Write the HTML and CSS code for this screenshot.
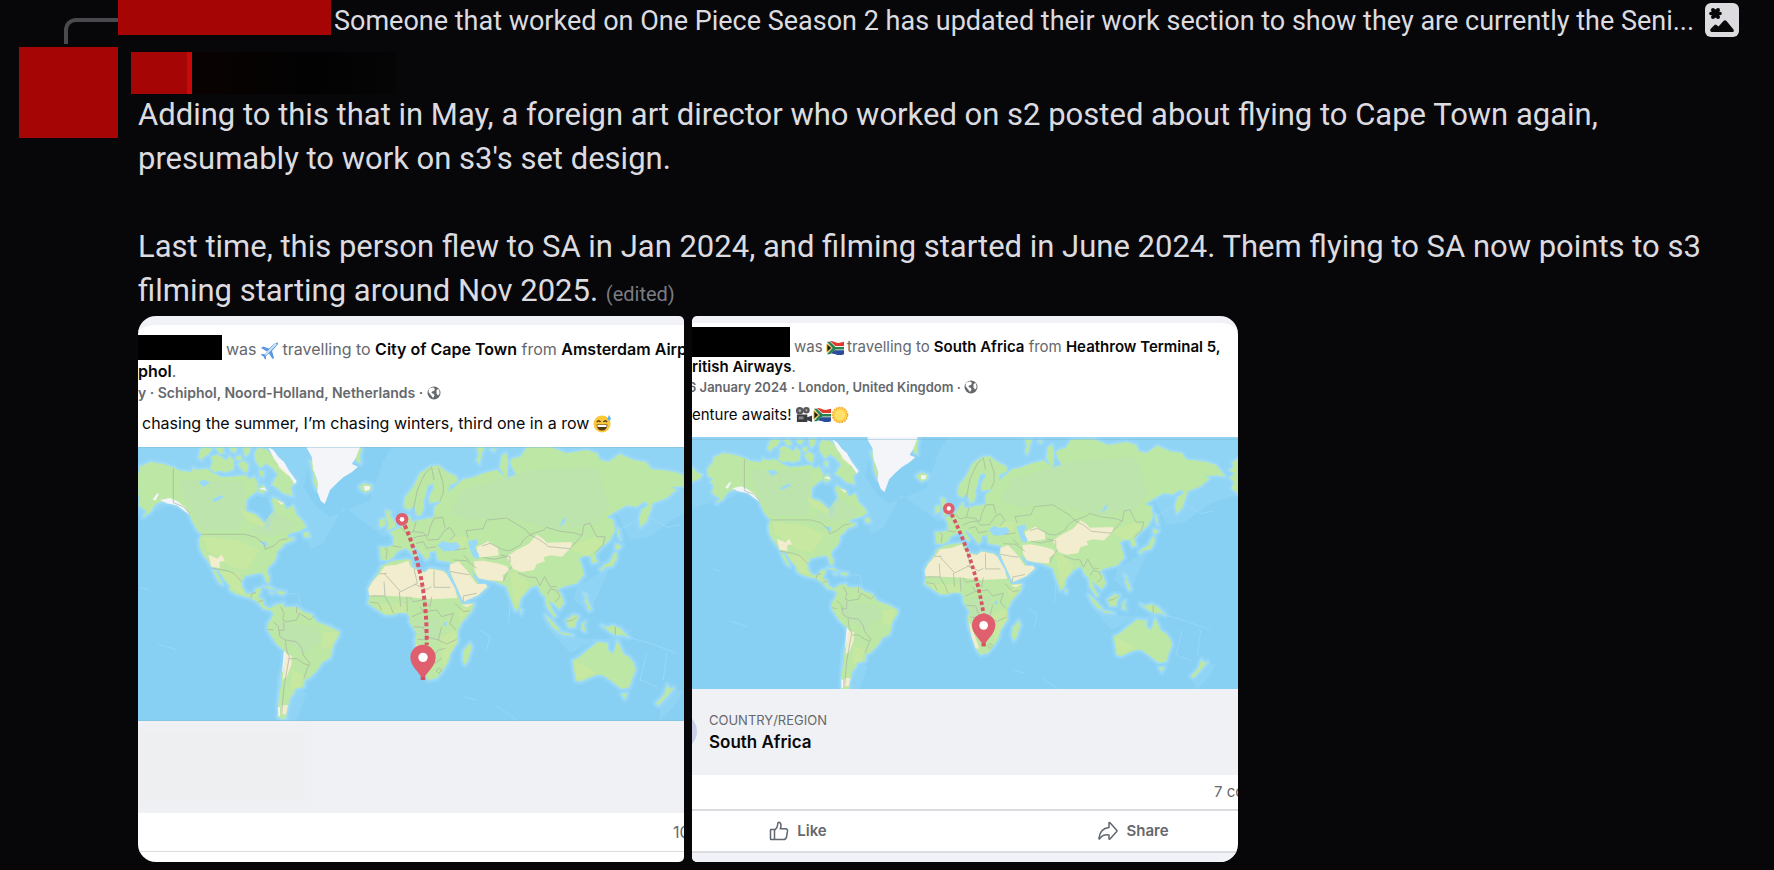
FILE: index.html
```html
<!DOCTYPE html>
<html lang="en">
<head>
<meta charset="utf-8">
<title>Message</title>
<link rel="stylesheet" href="styles.css">
</head>
<body>
<svg class="defs" aria-hidden="true">
  <defs>
    <path id="land" d="M10,118 28,95 30,80 62,66 100,72 130,82 150,92 185,96 190,84 205,90 230,86 250,100 275,112 310,110 345,105 360,118 372,110 384,130 385,150 365,165 350,178 345,205 352,215 375,222 395,240 402,258 413,280 420,262 428,235 440,222 430,200 426,182 430,172 445,180 462,192 470,208 490,196 500,225 520,245 528,260 510,272 485,278 470,285 478,295 492,300 465,310 452,325 440,335 440,348 432,365 415,382 411,395 418,412 416,430 408,425 402,405 395,398 370,402 345,408 335,425 338,445 350,462 372,460 378,447 394,443 390,460 385,473 398,478 402,495 415,504 425,505 430,498 440,494 460,490 462,500 480,502 500,500 520,515 545,523 560,545 580,553 600,560 628,575 626,588 610,615 605,640 600,655 578,665 562,690 540,712 524,720 522,740 495,748 492,760 480,775 475,795 470,815 468,836 455,838 445,830 445,790 452,740 456,700 464,660 462,632 440,612 425,590 412,568 415,550 425,535 430,520 420,510 400,506 385,488 365,475 340,468 318,462 300,450 298,435 280,415 265,390 245,382 232,360 220,345 210,325 208,300 215,283 200,268 188,245 175,215 150,198 125,190 100,184 80,190 70,200 62,215 40,230 50,212 38,205 25,195 30,170 20,160 28,150 12,140Z
    M248,388 258,392 268,412 278,434 268,428 256,408Z
    M240,88 248,66 244,50 262,44 276,52 290,62 298,48 312,62 310,88 290,96 268,92 254,96Z
    M205,52 212,28 228,20 246,26 234,44 222,50 214,60Z
    M258,24 276,20 282,38 270,42Z M300,20 320,24 316,38 304,34Z M318,50 332,46 334,62 320,60Z M340,20 362,20 358,38 346,50 342,36Z M324,72 340,62 356,74 350,98 336,90Z M374,40 384,24 410,28 440,58 468,88 498,126 482,142 488,168 460,160 440,142 426,134 438,112 444,104 428,84 408,70 392,84 376,62Z M385,155 390,140 400,134 410,152 396,160Z M390,92 402,94 400,112 390,106Z
    M520,278 534,276 540,290 524,292Z M480,292 492,292 486,300Z
    M398,438 420,440 436,450 420,446Z M444,452 466,456 458,464 444,460Z M420,456 432,458 426,460Z
    M540,62 550,66 556,110 564,130 562,150 552,128 548,96Z M682,22 696,22 690,48 692,70 680,64 674,46Z
    M688,140 702,130 726,136 724,150 706,158 694,150Z
    M768,210 782,216 780,226 796,250 798,262 772,270 776,256 770,240Z M750,240 764,234 766,256 750,262Z
    M718,470 715,445 725,425 745,400 755,378 785,364 830,358 845,360 846,380 868,392 885,396 898,384 940,392 950,400 970,440 988,475 995,492 1032,490 1026,512 995,548 982,575 984,605 960,640 955,665 940,690 920,714 896,720 884,705 872,670 858,632 855,600 860,580 840,548 840,532 830,520 808,516 790,525 765,524 735,505 714,490Z
    M1000,632 1020,610 1026,622 1012,665 1004,674 998,660Z
    M750,322 752,358 772,362 790,352 800,336 812,330 828,324 838,332 856,352 862,346 850,328 846,315 862,328 878,345 888,360 898,352 900,336 918,332 922,360 960,366 966,376 958,392 975,430 998,472 1000,485 1045,465 1072,440 1065,432 1046,432 1030,408 1026,394 1045,414 1072,420 1100,426 1130,440 1140,470 1156,512 1168,502 1172,475 1200,444 1222,434 1235,462 1246,470 1250,500 1272,532 1278,528 1264,504 1258,484 1270,490 1288,508 1302,490 1295,465 1282,450 1300,440 1340,430 1362,405 1355,378 1348,356 1364,345 1380,348 1388,370 1402,366 1394,345 1414,322 1440,300 1455,270 1450,240 1430,232 1455,215 1490,196 1520,200 1545,184 1556,195 1535,210 1528,235 1532,262 1550,244 1560,215 1568,190 1610,174 1638,150 1625,142 1660,138 1690,142 1660,105 1630,95 1595,90 1565,88 1548,66 1510,60 1470,42 1435,66 1410,60 1400,40 1370,30 1310,40 1260,20 1190,22 1172,50 1150,55 1140,66 1148,84 1162,108 1145,114 1128,126 1132,100 1134,66 1128,38 1114,48 1110,84 1126,110 1100,90 1060,100 1025,114 1000,118 975,140 955,156 958,136 982,126 980,110 950,95 925,76 900,80 870,100 850,140 825,172 822,200 836,210 852,198 862,228 874,224 882,200 880,186 888,160 892,138 908,130 912,142 898,170 900,188 936,184 914,200 912,232 870,240 846,246 838,226 828,240 812,262 780,276 790,292 792,316 770,322Z
    M1040,62 1046,44 1042,22 1062,22 1056,40 1048,72Z M1082,28 1096,26 1092,34Z
    M-40,113 -22,130 -6,136 -16,150 -40,158Z
    M1740,80 1712,96 1716,110 1704,122 1720,132 1704,146 1718,160 1710,180 1740,206Z
    M1410,388 1424,374 1440,366 1452,340 1460,336 1460,356 1448,378 1424,382 1416,392Z M1458,312 1474,318 1466,328 1456,326Z M1460,262 1466,270 1472,300 1466,290Z
    M1246,524 1264,540 1290,570 1284,574 1268,562 1256,544Z M1286,576 1312,580 1330,586 1300,584Z M1308,542 1330,524 1346,528 1338,548 1336,562 1316,562Z M1356,552 1366,545 1362,556 1366,574 1356,570Z M1362,460 1370,466 1366,484 1378,512 1384,508 1376,488Z M1168,506 1176,510 1174,520Z
    M1414,556 1430,562 1450,556 1472,566 1484,580 1496,592 1476,584 1460,586 1440,576 1430,568Z
    M1328,662 1350,650 1368,634 1384,622 1404,606 1434,610 1434,630 1450,642 1456,622 1462,602 1472,622 1480,642 1498,652 1512,672 1516,690 1506,716 1498,742 1476,746 1462,738 1446,724 1420,706 1400,704 1376,714 1354,724 1338,722 1334,700Z
    M1475,762 1492,760 1484,776Z M1612,736 1620,746 1632,744 1612,768 1586,796 1578,790 1602,766Z"/>
    <g id="world">
      <rect x="-60" y="0" width="1840" height="860" fill="#87cff3"/>
      <g fill="#9adaf8">
        <path d="M-60,0H560L520,140 560,200 600,230 720,180 760,60 800,0H1780V190L1640,230 1560,290 1500,300 1440,180 1000,160 900,250 760,290 640,200 580,310 540,330 490,190 200,130 90,210-60,250Z" opacity=".4"/>
        <path d="M480,720 530,760 500,843 440,843 440,700ZM1230,520 1330,590 1420,600 1520,560 1460,610 1400,600 1320,640 1250,560ZM1340,440 1440,380 1380,520 1330,480ZM1590,760 1660,750 1640,790 1590,843Z" opacity=".4"/>
      </g>
      <g fill="none" stroke="#a5dff9" stroke-width="3" opacity=".6">
        <path d="M30,442 56,450M85,612 140,630M450,462 505,462 512,500M1050,570 1080,590 1070,630M1140,490 1136,550M1560,232 1610,262 1652,254M1430,290 1540,230M1490,590 1560,610 1640,640M1550,640 1530,720 1580,740M1610,640 1600,720M1000,770 1040,780M1095,795 1160,840"/>
      </g>
      <use href="#land" fill="none" stroke="#9bdaf7" stroke-width="24" stroke-linejoin="round" opacity=".4"/>
      <use href="#land" fill="none" stroke="#9fdcf8" stroke-width="11" stroke-linejoin="round" opacity=".8"/>
      <use href="#land" fill="#bce7a4"/>
      <g fill="#bfe3b2" opacity=".75">
        <path d="M150,120 340,125 350,200 330,270 215,270 160,170ZM430,210 500,250 480,275 420,290 350,275 400,250ZM1000,150 1200,90 1400,80 1440,200 1400,250 1290,270 1120,230 1020,240 960,220ZM450,545 560,560 570,600 520,640 450,590ZM850,540 930,530 930,600 870,600Z"/>
      </g>
      <g fill="#cbe8a0" opacity=".75">
        <path d="M330,208 370,225 405,250 400,262 350,240ZM220,290 320,300 390,330 350,390 300,380 230,330ZM270,395 330,395 332,440 345,462 310,450ZM580,575 622,576 605,620 575,625ZM485,690 520,705 510,740 480,750ZM970,290 1010,290 1000,330 960,320ZM1140,400 1160,395 1200,430 1156,500ZM1310,320 1400,290 1420,310 1370,350ZM1334,665 1380,685 1400,700 1340,720ZM730,490 830,490 830,518 765,522ZM930,590 980,570 980,610 940,680ZM985,510 1026,500 990,545Z"/>
      </g>
      <g fill="#f2edce">
        <path d="M718,470 715,447 727,425 748,402 765,378 800,374 835,362 842,380 868,394 885,397 898,386 938,393 950,402 975,445 982,474 900,478 830,470 730,466Z"/>
        <path d="M960,374 985,364 1010,390 1040,432 1066,432 1072,440 1045,465 1000,485 975,430 960,394ZM1032,364 1060,362 1100,370 1130,378 1140,392 1118,405 1120,424 1072,420 1045,414 1034,392ZM1040,322 1074,304 1104,324 1106,346 1060,352 1042,350Z"/>
        <path d="M1130,350 1160,330 1196,312 1220,284 1240,296 1250,308 1326,306 1324,322 1296,350 1262,346 1240,352 1245,364 1220,372 1212,390 1176,396 1150,388 1140,368Z"/>
        <path d="M235,344 250,350 262,356 275,344 284,362 268,366 270,384 244,380ZM466,640 486,648 484,676 470,712 458,718ZM455,796 474,796 468,824 452,820ZM442,58 468,90 484,108 470,104 446,82ZM440,180 462,188 455,196ZM858,610 874,650 892,700 880,700 866,660ZM994,494 1030,492 1010,502Z"/>
      </g>
      <g fill="#f3f5f8">
        <path d="M528,0 530,24 545,50 550,90 558,110 564,130 562,155 572,182 584,192 592,172 600,150 622,128 640,112 666,96 684,80 666,72 678,52 690,22 692,0Z"/>
        <path d="M415,22 430,30 446,52 462,66 478,94 500,124 494,132 474,102 450,80 432,56ZM702,138 720,138 718,150 704,152ZM68,178 80,162 88,160 76,182ZM90,180 120,174 142,184 164,200 180,224 170,218 140,196 110,190ZM386,146 404,142 410,152ZM462,632 468,640 460,690 456,700ZM444,800 450,802 450,828 445,830Z"/>
      </g>
      <g fill="#9adaf8">
        <path d="M922,316 940,302 958,310 980,306 992,320 975,332 940,334ZM1014,304 1040,298 1044,310 1034,322 1048,346 1044,358 1030,352 1020,328ZM205,124 225,120 240,128 220,142ZM245,180 272,166 282,170 255,186ZM1286,262 1300,236 1310,232 1304,248ZM941,548 950,544 950,556 942,558ZM385,304 410,306 412,322 400,314ZM380,110 388,100 394,122 386,128Z"/>
      </g>
      <g fill="none" stroke="#a9b3a3" stroke-width="2.5" opacity=".85">
        <path d="M130,85V188L160,200 180,222M215,283H345L378,292 402,312 405,328 430,318 450,300 472,296M245,384 290,392 312,400 334,424M362,474 366,460 378,458M384,486 400,480M452,500 462,520 458,540 470,545 500,540 508,520 540,540 552,528M430,545 445,560 450,590 466,600 470,632 478,650 462,740 455,820M466,600 500,605 515,625 520,645 540,670 530,690 522,715M478,656 500,656 520,670 536,676M500,500 500,520M412,568 430,570M445,572 462,570 462,545"/>
        <path d="M762,425 765,468 715,468M762,400 812,455 862,430 852,385M748,402 770,400M912,392V442H960M852,432 890,448 905,440M720,486 745,490 755,510M765,470 780,495 790,520M808,455 812,500M830,470 832,515M838,470 850,485 880,480 900,500 905,470M846,530 880,515 920,510 935,530 970,520M870,500 880,515M850,560 880,562 890,590 925,600 935,560M925,600 950,612 980,598M862,598 892,600M875,650 910,650 925,630 945,625M910,650 915,670 935,655M918,692 928,684 936,690 926,700ZM975,490 1000,515 1020,512M970,520 960,550 978,570M1000,485 1000,468 1040,460M960,394 990,400 1018,404"/>
        <path d="M850,210 862,150 885,100 905,82M905,82 912,120M925,84 940,130 940,160 930,182M764,325 772,330 768,358M788,318 815,322M812,262 830,280 850,275 858,245M838,300 860,290 895,285 900,262 912,235M850,275 880,278 895,300 925,298 945,270 960,262 975,285 960,300M912,235 938,232 945,262M858,310 880,305 890,325 918,320M975,330 1010,325M1000,345 1020,364M970,360 1010,362 1040,385"/>
        <path d="M1014,292 1008,272 1060,266 1070,240 1130,234 1160,252 1186,268 1200,284 1180,300 1170,316 1140,332 1120,330 1080,310 1056,318M1200,284 1240,270 1250,262 1290,274 1330,278 1356,286 1362,254 1380,250 1400,290 1426,290 1418,316 1394,340M1200,284 1230,300 1256,320 1320,326 1356,286M1110,345 1140,350 1140,368M1060,352 1090,358 1130,350M1120,424 1130,400 1145,380M1165,400 1200,412 1218,412 1230,436 1244,410 1260,440 1280,440M1252,462 1262,446 1280,452 1290,470 1275,486M1310,544 1330,540 1340,530M1456,560V586"/>
      </g>
      <path d="M-60,22H1780M-60,842H1780" stroke="#7fb7cf" stroke-width="3" opacity=".5"/>
    </g>
    <g id="origin"><circle r="19" fill="#df5d6c"/><circle r="7" fill="#fff"/></g>
    <g id="pin"><path d="M0,68C-10,45-38,28-38,0A38,38 0 0 1 38,0C38,28 10,45 0,68Z" fill="#e05f6e"/><path d="M-7,58H7V68H-7Z" fill="#d5505f"/><circle r="14" fill="#fff"/></g>
    <g id="za">
      <path d="M1 3Q5 1 9 3T19 3V16Q14 18 10 16T1 16Z" fill="#f4f4f2"/>
      <path d="M4 2Q7 2 10 3.500T19 3V7.500H10Z" fill="#e0392e"/>
      <path d="M9 12H19V16Q14 18 10 16L5 15Z" fill="#2b4c9b"/>
      <path d="M1 3 4 3 10 8.500H19V11H10L4 16H1L7 9.500Z" fill="#28804f"/>
      <path d="M1 5 6 9.500 1 14Z" fill="#1b1b18" stroke="#f0b52c"/>
    </g>
    <g id="globe">
      <circle cx="7" cy="7" r="6.500" fill="#65686c"/>
      <path d="M2 3Q4 1 6.500 1.500L8 3 7 5 5 5.500 4.500 7 7 8 7.500 9.500 6 12 4.500 10 3 8 1.500 6ZM9.500 4 11.500 3Q13 5 12.500 8L11 9.500 9.500 7.500Z" fill="#fff"/>
    </g>
  </defs>
</svg>

<article class="message">
  <header class="reply">
    <span class="spine"></span>
    <span class="reply-name"></span>
    <span class="reply-text">Someone that worked on One Piece Season 2 has updated their work section to show they are currently the Seni...</span>
    <svg class="reply-icon" viewBox="0 0 34 34" role="img" aria-label="Image"><rect width="34" height="34" rx="6" fill="#dcdce0"/><g fill="#070709"><circle cx="10.500" cy="10.500" r="4.200"/><circle cx="8" cy="7" r="2"/><circle cx="13" cy="7" r="2"/><circle cx="15" cy="10.500" r="1.800"/><circle cx="6" cy="10.500" r="1.800"/><circle cx="8" cy="14" r="2"/><circle cx="13" cy="14" r="2"/><path d="M5.500 26 9.500 22Q10.500 21 11.500 22L13.500 23.500 18.500 18Q20 16.500 21.500 18L28.500 26.500Q29.500 29 27.500 29H7Q4.500 28.500 5.500 26Z"/></g></svg>
  </header>
  <div class="avatar"></div>
  <div class="content">
    <div class="author"><span class="author-name"></span><span class="author-meta"></span></div>
    <div class="text">
      <p>Adding to this that in May, a foreign art director who worked on s2 posted about flying to Cape Town again, presumably to work on s3's set design.</p>
      <p>Last time, this person flew to SA in Jan 2024, and filming started in June 2024. Them flying to SA now points to s3 filming starting around Nov 2025. <small>(edited)</small></p>
    </div>
    <div class="gallery">
      <section class="card card-a">
        <div class="post-head">
          <div class="line title"><span class="redacted"></span>was <svg class="emoji" viewBox="0 0 19 19" role="img" aria-label="Airplane"><path d="M1 7 3 5.500 9 7.500 14 3Q17 1 18 1.500 18.500 3 16 5.500L12 10 14 17 12.500 18 9 12.500 6 15 6 18 5 18.500 3.500 15.500 1 14 1.500 13 4.500 13 7 10.500Z" fill="#5a9be0"/><path d="M5 14 16 3" stroke="#cfe3f6" stroke-width="2"/></svg> travelling to <b>City of Cape Town</b> from <b>Amsterdam Airport</b></div>
          <div class="line title"><b>phol</b>.</div>
          <div class="line meta">y · Schiphol, Noord-Holland, Netherlands · <svg class="globe" viewBox="0 0 14 14" role="img" aria-label="Public"><use href="#globe"/></svg></div>
          <p class="line post-text inset">chasing the summer, I’m chasing winters, third one in a row <svg class="emoji" viewBox="0 0 19 19" role="img" aria-label="Grinning face with sweat"><circle cx="9" cy="10" r="8.500" fill="#fbc83a"/><path d="M4 8Q5.500 5.500 7.500 8M10.500 8Q12.500 5.500 14 8" fill="none" stroke="#5b3b16" stroke-width="1.500"/><path d="M3.500 10.500H14.500Q14 16.500 9 16.500T3.500 10.500Z" fill="#5b3b16"/><path d="M4.500 11H13.500V13H4.500Z" fill="#fff"/><path d="M16 1Q19 5 17 6.500 14.500 7 14.500 4.500Z" fill="#5db8ef"/></svg></p>
        </div>
        <svg class="map" viewBox="24 21 1638 822" role="img" aria-label="Route from Amsterdam to Cape Town">
          <use href="#world"/>
          <path class="route" d="M816,238Q893,400 890,616"/>
          <use href="#origin" x="816" y="238"/><use href="#pin" x="879" y="652"/>
        </svg>
        <div class="place"><span class="smudge"></span></div>
        <div class="counts"><span>10 comments</span></div>
      </section>
      <section class="card card-b">
        <div class="post-head">
          <div class="line title"><span class="redacted"></span>was <svg class="emoji" viewBox="0 0 19 19" role="img" aria-label="South Africa"><use href="#za"/></svg> travelling to <b>South Africa</b> from <b>Heathrow Terminal 5,</b></div>
          <div class="line title"><b>ritish Airways</b>.</div>
          <div class="line meta cut">6 January 2024 · London, United Kingdom · <svg class="globe" viewBox="0 0 14 14" role="img" aria-label="Public"><use href="#globe"/></svg></div>
          <p class="line post-text">enture awaits! <span class="emojis"><svg class="emoji" viewBox="0 0 19 19" role="img" aria-label="Movie camera"><circle cx="5" cy="5" r="4" fill="#55575b"/><circle cx="12" cy="4.500" r="3.500" fill="#55575b"/><path d="M2 9H13V17H2ZM13 12 18 10V17L13 15Z" fill="#3a3c40"/><circle cx="5" cy="5" r="1.500" fill="#a5a7aa"/><circle cx="12" cy="4.500" r="1.200" fill="#a5a7aa"/><path d="M4 11H9V14H4Z" fill="#85878b"/></svg><svg class="emoji" viewBox="0 0 19 19" role="img" aria-label="South Africa"><use href="#za"/></svg><svg class="emoji" viewBox="0 0 19 19" role="img" aria-label="Sun"><circle cx="9.500" cy="9.500" r="8" fill="#fbd04a" stroke="#f5ad33" stroke-width="1.500" stroke-dasharray="2 1"/><circle cx="9.500" cy="9.500" r="5.500" fill="#ffe06a"/></svg></span></p>
        </div>
        <svg class="map" viewBox="-40 14 1771 817" role="img" aria-label="Route from London to South Africa">
          <use href="#world"/>
          <path class="route" d="M793,246Q878,412 906,590"/>
          <use href="#origin" x="793" y="246"/><use href="#pin" x="906" y="625"/>
        </svg>
        <div class="place"><span class="place-dot"></span><div><div class="place-kind">COUNTRY/REGION</div><div class="place-name">South Africa</div></div></div>
        <div class="counts"><span>7 comments</span></div>
        <div class="actions">
          <button type="button"><svg viewBox="0 0 20 20" aria-hidden="true"><path d="M1.500 9Q1.500 8.500 2 8.500H5.500V18.500H2Q1.500 18.500 1.500 18ZM5.500 9.500Q8.500 7 8.700 3.500 8.700 1.200 10 1.200 12 1.500 12 4.500 12 6.500 11.200 7.800H16.500Q18.800 8 18.500 10.200L17.500 16Q17 18.500 14.500 18.500H5.500"/></svg>Like</button>
          <button type="button" class="share"><svg viewBox="0 0 20 20" aria-hidden="true"><path d="M11 2.200Q11 1 12 1.800L18.700 9.200Q19.200 10 18.700 10.600L12 18Q11 18.800 11 17.600V14Q5 13 1.800 17.600 .8 18.500 1 17 2 7.500 11 6.500Z"/></svg>Share</button>
        </div>
        <div class="tail"></div>
      </section>
    </div>
  </div>
</article>
</body>
</html>
```
FILE: styles.css
```css
* { box-sizing: border-box; }
body { margin: 0; background: #070709; color: #dcdce0; font-family: Roboto, "Liberation Sans", sans-serif; }
p { margin: 0; }
svg { display: block; }
.defs { position: absolute; width: 0; height: 0; }

.message { display: grid; grid-template-columns: 118px 1fr; padding-bottom: 8px; }
.reply { grid-column: 1 / -1; display: flex; align-items: flex-start; height: 47px; padding-right: 35px; }
.spine { width: 54px; height: 26px; margin: 18px 0 0 64px; border: solid #4a4a4e; border-width: 4px 0 0 4px; border-radius: 12px 0 0 0; flex: none; }
.reply-name { width: 213px; height: 35px; background: #a50505; flex: none; }
.reply-text { flex: 1; min-width: 0; margin-left: 3px; font-size: 27px; line-height: 42px; white-space: nowrap; overflow: hidden; text-overflow: ellipsis; }
.reply-icon { width: 34px; height: 34px; margin: 3px 0 0 8px; flex: none; }

.avatar { width: 99px; height: 91px; margin-left: 19px; background: #a50505; }
.content { padding: 5px 60px 0 20px; }
.author { display: flex; height: 42px; margin: 0 0 -1px -7px; }
.author-name { width: 61px; background: #a50505; border-right: 5px solid #c80909; }
.author-meta { width: 204px; background: linear-gradient(90deg, #0a0202, #020202 60%, #050506); }
.text { font-size: 31px; line-height: 44px; }
.text p + p { margin-top: 44px; }
.text small { font-size: 20px; line-height: 20px; color: #7b7b82; }

.gallery { display: grid; grid-template-columns: 1fr 1fr; gap: 8px; max-width: 1100px; margin-top: 3px; }
.card { aspect-ratio: 1; display: flex; flex-direction: column; overflow: hidden; background: #fff; color: #080809; font-family: Inter, "Liberation Sans", sans-serif; border-radius: 5px; }
.card-a { border-top: 9px solid #f0f2f7; border-radius: 18px 5px 5px 18px; }
.card-b { border-top: 7px solid #f0f2f7; border-radius: 5px 18px 18px 5px; }
.line { display: flex; align-items: center; white-space: pre; }
.line.title:first-child { align-items: flex-end; }
.title { color: #65686c; }
.title b, .place-name { color: #080809; font-weight: 600; }
.meta { color: #65686c; font-weight: 600; }
.inset { padding-left: 4px; }
.cut { margin-left: -4px; }
.redacted { align-self: stretch; background: #000; flex: none; }
.emojis { display: flex; gap: 2px; }
.emoji { flex: none; margin: 0 -1px; }
.map { width: 100%; flex: none; }
.route { fill: none; stroke: #d85565; stroke-width: 12; stroke-dasharray: 12 8; }

.card-a .post-head { height: 122px; padding-top: 10px; }
.card-a .line { height: 22px; font-size: 16px; line-height: 22px; }
.card-a .line.title:first-child { height: 25px; }
.card-a .line.meta { font-size: 14px; }
.card-a .post-text { margin-top: 8px; }
.card-a .redacted { width: 84px; margin-right: 4px; }
.card-a .emoji { width: 19px; height: 19px; }
.globe { width: 14px; height: 14px; }

.card-b .post-head { height: 114px; padding-top: 4px; }
.card-b .line { height: 20px; font-size: 15px; line-height: 20px; }
.card-b .line.title:first-child { height: 30px; }
.card-b .line.meta { font-size: 13px; }
.card-b .post-text { margin-top: 8px; }
.card-b .redacted { width: 98px; margin-right: 4px; }
.card-b .emoji { width: 18px; height: 18px; }

.place { display: flex; align-items: center; background: #f0f1f5; overflow: hidden; }
.card-a .place { height: 92px; }
.card-b .place { height: 86px; }
.smudge { width: 170px; height: 76px; background: #eeeff1; filter: blur(2px); }
.place-dot { width: 37px; height: 37px; margin: 0 12px 0 -32px; border-radius: 50%; background: #c9cfe4; }
.place-kind { font-size: 13px; line-height: 20px; color: #65686c; }
.place-name { font-size: 17px; line-height: 24px; }
.counts { display: flex; justify-content: flex-end; align-items: center; color: #65686c; white-space: nowrap; border-bottom: 2px solid #dadcdf; }
.card-a .counts { height: 39px; font-size: 16px; border-bottom-width: 1px; }
.card-b .counts { height: 36px; font-size: 15px; }
.card-a .counts span { width: 11px; }
.card-b .counts span { width: 24px; }
.actions { display: grid; grid-template-columns: 212fr 125fr 209fr; height: 42px; border-bottom: 2px solid #dadcdf; }
.actions button { display: flex; align-items: center; justify-content: center; gap: 8px; border: 0; padding: 0; background: none; color: #65686c; font: 600 15px Inter, "Liberation Sans", sans-serif; }
.actions .share { grid-column: 3; }
.actions svg { width: 20px; height: 20px; fill: none; stroke: #606770; stroke-width: 1.500; stroke-linejoin: round; }
.tail { flex: 1; background: #f0f2f7; }
```
